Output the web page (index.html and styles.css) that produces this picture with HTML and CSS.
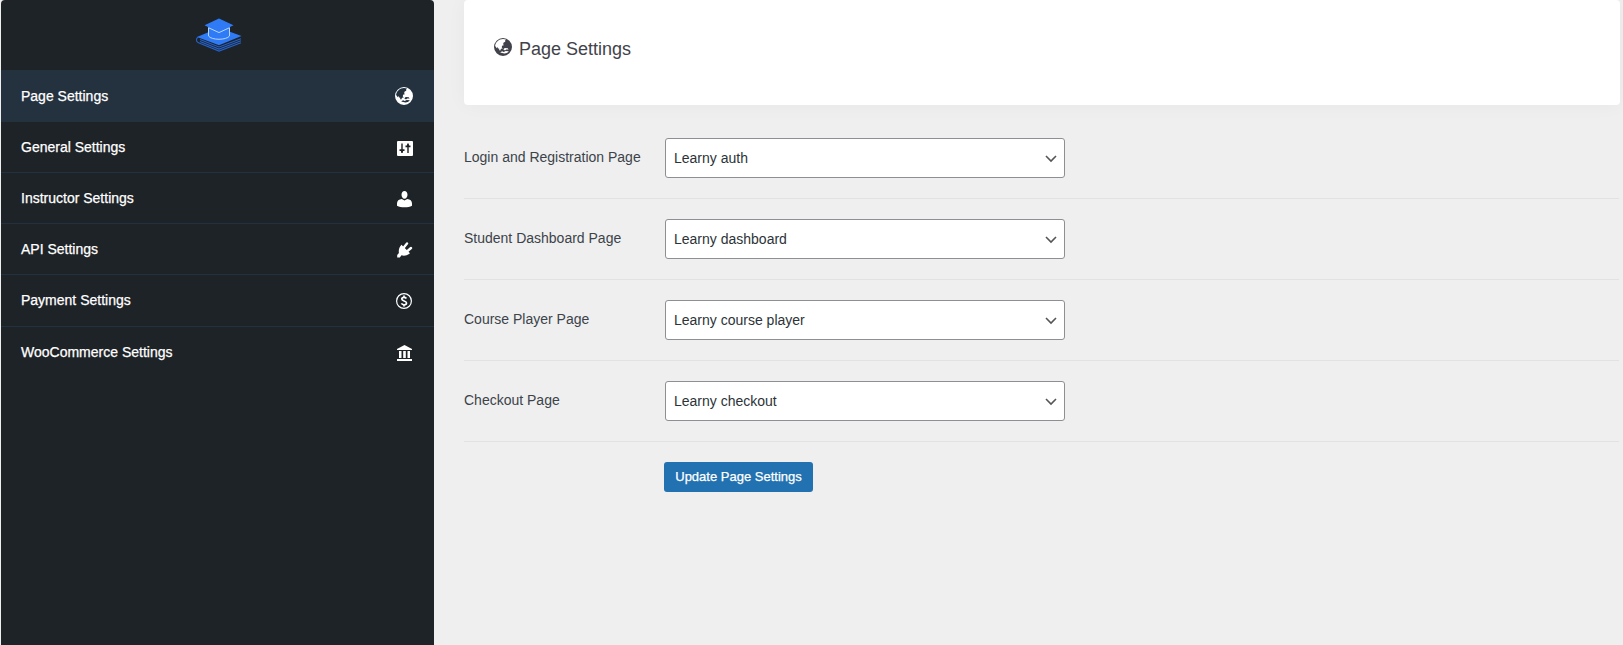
FILE: index.html
```html
<!DOCTYPE html>
<html lang="en">
<head>
<meta charset="utf-8">
<title>Page Settings</title>
<link rel="stylesheet" href="styles.css">
</head>
<body>
<svg class="sprite" aria-hidden="true">
  <symbol id="globe" viewBox="0 0 18 18">
    <path fill-rule="evenodd" d="M9 0a9 9 0 1 0 0 18A9 9 0 0 0 9 0zM1.1 8.500C1.300 4.200 4.800 1 9 1c1.200 0 2.300.2 3.300.7l-1.300.9.300 1.200-1.600.6-.6 1.500.7 1.300-1.800.5-.2 1.700 1 1-1.800.4-.7 1.800-1-.4-.3-2.200-.9 1-.6-2-1 1.200-.7-1.700zM9.300 11.300l1.500-1.200 2.900.1.900 1.200-2.400.1-1.200.9zM6.200 14.600l1.900-1.300 1.600.7 2-.9 3.100.2c-1.100 1.500-2.600 2.100-4.400 2.200l-2.300-.6z"/>
  </symbol>
  <symbol id="sliders" viewBox="0 0 16 15">
    <path fill-rule="evenodd" d="M1 0h14a1 1 0 0 1 1 1v13a1 1 0 0 1-1 1H1a1 1 0 0 1-1-1V1a1 1 0 0 1 1-1zM4.300 2.500v5.700H2.500v1.800h1.400l.4 2h1.400l.4-2h1.400V8.200H5.700V2.500zM10.300 2.500l-.4 2H8.500v1.800h1.800v5.700h1.400V6.300h1.800V4.500h-1.400l-.4-2z"/>
  </symbol>
  <symbol id="person" viewBox="0 0 16 17">
    <path d="M7.500 0C9.200 0 10.500 1.500 10.500 3.700S9.200 7.700 7.500 7.700 4.500 5.900 4.500 3.700 5.800 0 7.500 0zM4.800 7.900L7.500 9.500l2.700-1.600c3 .2 4.800 1.700 4.800 4.600v2.200c-2 1-4.500 1.600-7.500 1.600S2 15.700 0 14.700v-2.200c0-2.900 1.800-4.400 4.800-4.600z"/>
  </symbol>
  <symbol id="plug" viewBox="0 0 16 16">
    <path d="M4.500 2.800L13 11.300C10.600 13.500 7.200 14.200 4.500 13.300L2.800 15.600H.2V13l1.700-1.900C1.400 8 2.300 5 4.500 2.800z"/>
    <path class="prong" d="M6.800 5.400l3.200-3.900M10.400 9.200L14 6"/>
  </symbol>
  <symbol id="dollar" viewBox="0 0 16 16">
    <circle class="line" cx="8" cy="8" r="7.400"/>
    <path class="coin" d="M10.400 5.400C9.800 4.600 9 4.300 8 4.300c-1.300 0-2.200.7-2.200 1.700 0 2.400 4.700 1.500 4.700 4 0 1.100-1 1.800-2.400 1.800-1.200 0-2.100-.5-2.700-1.400M8 2.600v2M8 11.500v2"/>
  </symbol>
  <symbol id="bank" viewBox="0 0 16 16">
    <path d="M7.500 0L15 4v1H0V4zM2 6h2.500v7H2zM6.200 6h2.600v7H6.200zM10.500 6H13v7h-2.500zM0 14h15v2H0z"/>
  </symbol>
</svg>
<div class="layout">
  <aside class="sidebar">
    <div class="logo">
      <svg width="47" height="35" viewBox="0 0 47 36" preserveAspectRatio="none">
        <path class="book" d="M2 19.500L24 10 46.500 18.500 24 28z"/>
        <path class="pages" d="M4 19.500C.8 20 .6 24.500 3.500 25.500L24 34l22-8.500M5 22l19 7.800 22-8.500M5 24.200l19 7.800 22-8.500"/>
        <path class="cap" d="M13.500 9v8c3 5 18 5 21 0V9z"/>
        <path class="cap" d="M9.500 7.500L24 .5 38.500 7.500 24 15z"/>
        <path class="trim" d="M13.500 10v8.500c3 4.500 18 4.500 21 0V10M13.500 10L24 15l10.500-5"/>
      </svg>
    </div>
    <nav class="menu">
      <a class="item active"><span>Page Settings</span><svg class="icon-globe"><use href="#globe"/></svg></a>
      <a class="item"><span>General Settings</span><svg class="icon-sliders"><use href="#sliders"/></svg></a>
      <a class="item"><span>Instructor Settings</span><svg class="icon-person"><use href="#person"/></svg></a>
      <a class="item"><span>API Settings</span><svg class="icon-plug"><use href="#plug"/></svg></a>
      <a class="item tall"><span>Payment Settings</span><svg class="icon-dollar"><use href="#dollar"/></svg></a>
      <a class="item last"><span>WooCommerce Settings</span><svg class="icon-bank"><use href="#bank"/></svg></a>
    </nav>
  </aside>
  <main class="content">
    <header class="card">
      <svg class="icon-globe"><use href="#globe"/></svg>
      <h1>Page Settings</h1>
    </header>
    <form class="form">
      <div class="row"><label>Login and Registration Page</label><div class="select"><span>Learny auth</span><svg class="chevron" viewBox="0 0 12 8"><path d="M1 1l5 5 5-5"/></svg></div></div>
      <div class="row"><label>Student Dashboard Page</label><div class="select"><span>Learny dashboard</span><svg class="chevron" viewBox="0 0 12 8"><path d="M1 1l5 5 5-5"/></svg></div></div>
      <div class="row"><label>Course Player Page</label><div class="select"><span>Learny course player</span><svg class="chevron" viewBox="0 0 12 8"><path d="M1 1l5 5 5-5"/></svg></div></div>
      <div class="row"><label>Checkout Page</label><div class="select"><span>Learny checkout</span><svg class="chevron" viewBox="0 0 12 8"><path d="M1 1l5 5 5-5"/></svg></div></div>
      <button class="submit" type="button">Update Page Settings</button>
    </form>
  </main>
</div>
</body>
</html>
```
FILE: styles.css
```css
* { box-sizing: border-box; }
body {
  margin: 0;
  background: #efefef;
  color: #3c434a;
  font: 14px/20px "Liberation Sans", Arial, sans-serif;
  overflow: hidden;
}
.sprite { display: none; }
.layout { display: flex; height: 645px; padding-left: 1px; }
.sidebar {
  width: 433px;
  background: #1e2327;
  border-radius: 4px 4px 0 0;
  color: #fff;
}
.logo { height: 70px; padding: 18px 0 0 194px; }
.logo svg { display: block; }
.book, .cap { fill: #2f7bf6; }
.pages { fill: none; stroke: #2561c9; stroke-width: 1.1; }
.trim { fill: none; stroke: #b9d5ff; stroke-width: 1; }
.item {
  display: flex;
  align-items: center;
  justify-content: space-between;
  height: 51px;
  padding: 0 21px 0 20px;
  border-bottom: 1px solid #22303f;
  -webkit-text-stroke: 0.25px #fff;
}
.item.active { height: 52px; background: #24313f; border-bottom-color: #24313f; }
.item.tall { height: 52px; padding-bottom: 1px; }
.item.last { border-bottom: 0; padding-bottom: 1px; }
.item svg { fill: #fff; margin-top: 1px; }
.item .icon-person { margin-top: 2px; }
.item .icon-sliders, .item .icon-dollar, .item .icon-bank { margin-top: 2px; }
.icon-globe { width: 18px; height: 18px; }
.icon-sliders { width: 16px; height: 15px; }
.icon-person { width: 16px; height: 17px; }
.icon-plug, .icon-dollar, .icon-bank { width: 16px; height: 16px; }
.item .icon-dollar { margin-right: 1px; }
.prong { fill: none; stroke: #fff; stroke-width: 2.4; stroke-linecap: round; }
.line { fill: none; stroke: #fff; stroke-width: 1.2; }
.coin { fill: none; stroke: #fff; stroke-width: 1.7; }
.content { flex: 1; padding: 0 3px 0 30px; }
.card {
  display: flex;
  height: 105px;
  padding: 38px 30px;
  gap: 7px;
  background: #fff;
  border-radius: 4px;
  box-shadow: 0 0 20px rgba(82, 63, 105, 0.04);
}
.card svg { fill: #42424a; }
.card h1 { margin: 0; font-size: 18px; line-height: 22px; font-weight: 400; color: #42424a; }
.form { padding: 33px 1px 0 0; }
.row {
  display: flex;
  height: 61px;
  margin-bottom: 20px;
  border-bottom: 1px solid #e2e2e3;
}
.row label { width: 201px; padding-top: 9px; }
.select {
  display: flex;
  align-items: center;
  justify-content: space-between;
  width: 400px;
  height: 40px;
  padding: 0 7px 0 8px;
  border: 1px solid #8c8f94;
  border-radius: 3px;
  background: #fff;
  color: #2c3338;
}
.chevron { width: 12px; height: 8px; margin-top: 1px; fill: none; stroke: #555; stroke-width: 1.6; }
.submit {
  display: block;
  width: 149px;
  height: 30px;
  margin-left: 200px;
  padding: 0;
  border: 0;
  border-radius: 3px;
  background: #2271b1;
  color: #fff;
  font: 13px/30px "Liberation Sans", Arial, sans-serif;
  -webkit-text-stroke: 0.25px #fff;
}
```
